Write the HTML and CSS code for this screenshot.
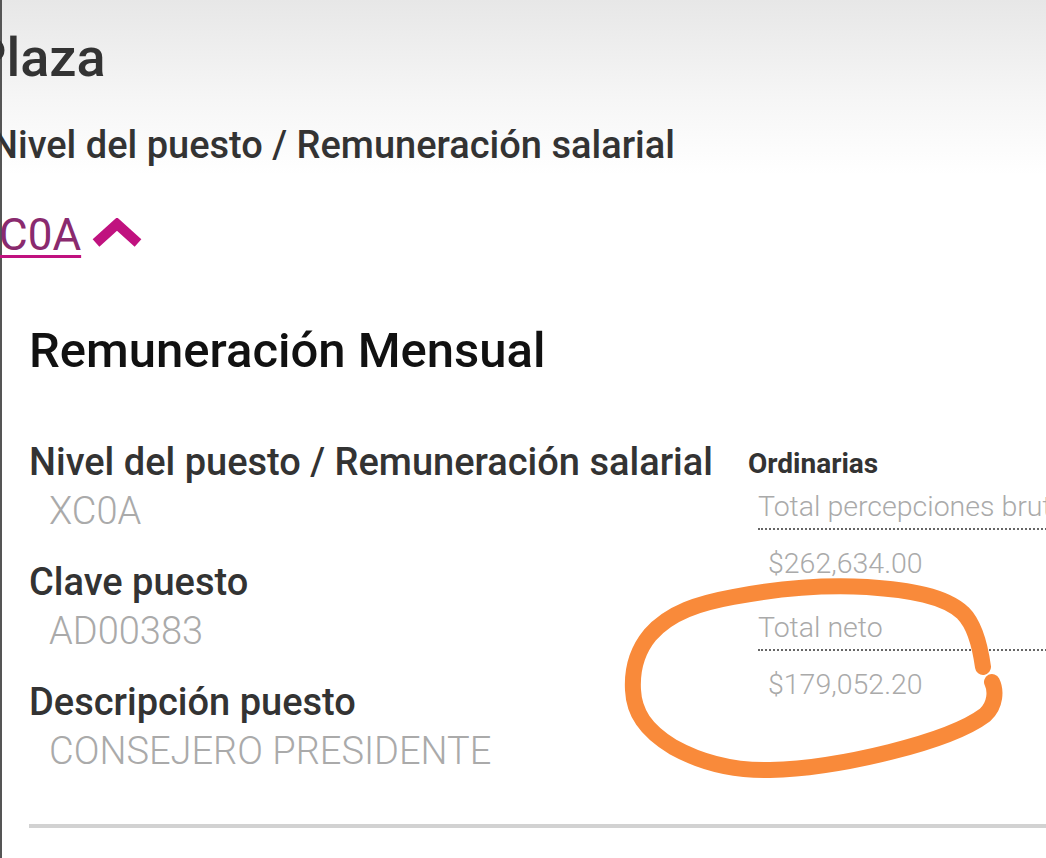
FILE: index.html
```html
<!DOCTYPE html>
<html lang="es">
<head>
<meta charset="utf-8">
<title>Plaza</title>
<link rel="stylesheet" href="styles.css">
</head>
<body>
<div class="page">
  <header class="plaza">
    <h1 class="plaza-title">Plaza</h1>
    <p class="plaza-sub">Nivel del puesto / Remuneración salarial</p>
    <div class="plaza-link-row">
      <a class="plaza-link" href="#">XC0A</a>
      <svg class="chevron" width="50" height="30" viewBox="0 0 50 30" aria-hidden="true">
        <polyline points="4,25 25,6 46,25" fill="none" stroke="#c0127f" stroke-width="10" stroke-linejoin="miter"/>
      </svg>
    </div>
  </header>

  <section class="card">
    <h2 class="card-title">Remuneración Mensual</h2>
    <div class="card-body">
      <div class="col-left">
        <div class="item">
          <div class="label">Nivel del puesto / Remuneración salarial</div>
          <div class="value">XC0A</div>
        </div>
        <div class="item">
          <div class="label">Clave puesto</div>
          <div class="value">AD00383</div>
        </div>
        <div class="item">
          <div class="label">Descripción puesto</div>
          <div class="value">CONSEJERO PRESIDENTE</div>
        </div>
      </div>
      <div class="col-right">
        <div class="group-title">Ordinarias</div>
        <div class="money">
          <div class="money-label">Total percepciones brutas</div>
          <div class="money-value">$262,634.00</div>
        </div>
        <div class="money">
          <div class="money-label">Total neto</div>
          <div class="money-value">$179,052.20</div>
        </div>
      </div>
    </div>
    <div class="divider"></div>
  </section>

  <svg class="scribble" width="420" height="240" viewBox="600 560 420 240" aria-hidden="true">
    <path d="M983 667 C 980 645, 975 625, 963 613 C 945 596, 910 590, 867 587 C 830 585, 790 586, 733 597 C 700 603, 670 612, 650 635 C 636 652, 632 672, 633 690 C 634 712, 645 730, 673 747 C 700 762, 730 771, 770 770 C 810 769, 850 762, 890 752 C 930 742, 965 730, 985 715 C 996 705, 996 690, 992 682" fill="none" stroke="#f98a3a" stroke-width="16" stroke-linecap="round" stroke-linejoin="round"/>
  </svg>
</div>
</body>
</html>
```

FILE: styles.css
```css
* { box-sizing: border-box; }

html, body {
  margin: 0;
  padding: 0;
}

body {
  width: 1046px;
  height: 858px;
  overflow: hidden;
  font-family: Roboto, "Liberation Sans", Arial, sans-serif;
  background: linear-gradient(to bottom, #e7e7e7 0px, #f6f6f6 100px, #ffffff 175px, #ffffff 100%);
}

.page {
  position: relative;
  height: 858px;
  border-left: 2px solid #555;
  padding-top: 28px;
}

/* ---------- header ---------- */
.plaza-title {
  margin: 0 0 0 -30px;
  font-size: 54px;
  line-height: 60px;
  font-weight: 500;
  color: #333;
}

.plaza-sub {
  margin: 35px 0 0 -11px;
  font-size: 38px;
  line-height: 44px;
  font-weight: 500;
  color: #333;
  white-space: nowrap;
}

.plaza-link-row {
  display: flex;
  align-items: center;
  gap: 11px;
  margin: 42px 0 0 -30px;
  height: 52px;
}

.plaza-link {
  font-size: 44px;
  line-height: 52px;
  font-weight: 400;
  color: #8a2a6e;
  text-decoration: underline;
  text-decoration-color: #c0127f;
  text-decoration-thickness: 3px;
  text-underline-offset: 5px;
}

.chevron {
  display: block;
  margin-top: -4px;
}

/* ---------- card ---------- */
.card {
  margin-top: 62px;
  padding-left: 27px;
}

.card-title {
  margin: 0;
  font-size: 49px;
  line-height: 56px;
  font-weight: 500;
  color: #111;
}

.card-body {
  display: flex;
  margin-top: 61px;
}

.col-left {
  width: 719px;
  display: flex;
  flex-direction: column;
  gap: 22px;
}

.label {
  font-size: 38px;
  line-height: 44px;
  font-weight: 500;
  color: #333;
  white-space: nowrap;
}

.value {
  padding-left: 20px;
  font-size: 38px;
  line-height: 54px;
  font-weight: 300;
  color: #aaa;
  white-space: nowrap;
}

.col-right {
  flex: 1;
  padding-top: 7px;
  min-width: 0;
}

.group-title {
  font-size: 28px;
  line-height: 34px;
  font-weight: 700;
  color: #333;
}

.money {
  margin-top: 9px;
  padding-left: 10px;
}

.money + .money {
  margin-top: 30px;
}

.money-label {
  font-size: 28.5px;
  line-height: 34px;
  font-weight: 300;
  color: #aaa;
  white-space: nowrap;
  overflow: hidden;
  padding-bottom: 4px;
  border-bottom: 2px dotted #666;
  margin-right: -40px;
}

.money-value {
  margin-top: 17px;
  padding-left: 10px;
  font-size: 28.5px;
  line-height: 34px;
  font-weight: 300;
  color: #aaa;
}

.divider {
  margin-top: 46px;
  height: 4px;
  background: #d2d2d2;
  margin-right: -10px;
}

/* hand-drawn annotation lying over the content */
.scribble {
  position: absolute;
  left: 598px;
  top: 560px;
  pointer-events: none;
}
```
